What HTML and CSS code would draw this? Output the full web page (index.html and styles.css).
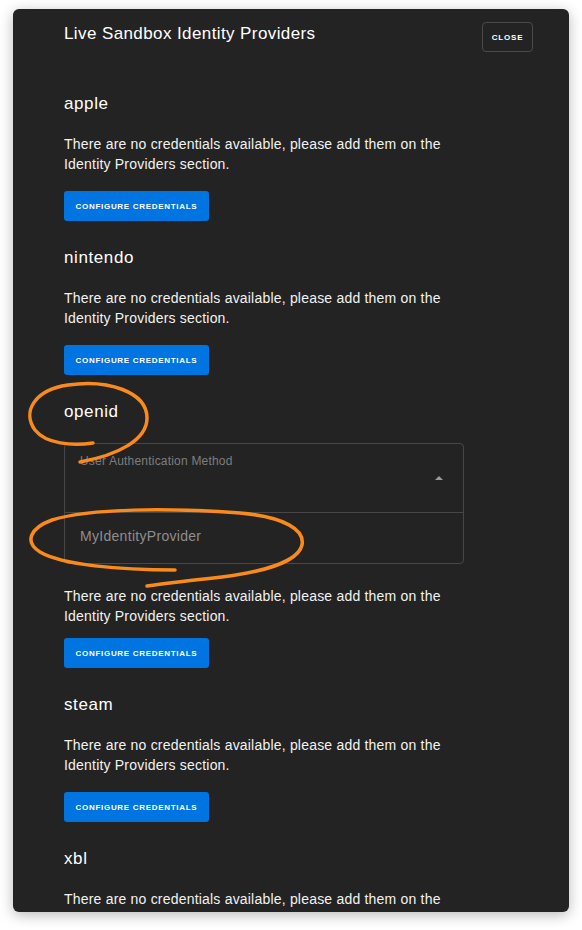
FILE: index.html
```html
<!DOCTYPE html>
<html>
<head>
<meta charset="utf-8">
<link rel="stylesheet" href="styles.css">
</head>
<body>
<div class="modal">
  <div class="header">
    <h1 class="title">Live Sandbox Identity Providers</h1>
    <button class="close-btn">CLOSE</button>
  </div>

  <section class="provider">
    <h2 class="provider-name">apple</h2>
    <p class="note">There are no credentials available, please add them on the Identity Providers section.</p>
    <button class="config-btn">CONFIGURE CREDENTIALS</button>
  </section>

  <section class="provider">
    <h2 class="provider-name">nintendo</h2>
    <p class="note">There are no credentials available, please add them on the Identity Providers section.</p>
    <button class="config-btn">CONFIGURE CREDENTIALS</button>
  </section>

  <section class="provider">
    <h2 class="provider-name name-openid">openid</h2>
    <div class="select">
      <div class="select-field">
        <span class="select-label">User Authentication Method</span>
        <span class="select-arrow"></span>
      </div>
      <div class="select-option">MyIdentityProvider</div>
    </div>
    <p class="note note-openid">There are no credentials available, please add them on the Identity Providers section.</p>
    <button class="config-btn">CONFIGURE CREDENTIALS</button>
  </section>

  <section class="provider">
    <h2 class="provider-name">steam</h2>
    <p class="note">There are no credentials available, please add them on the Identity Providers section.</p>
    <button class="config-btn">CONFIGURE CREDENTIALS</button>
  </section>

  <section class="provider">
    <h2 class="provider-name">xbl</h2>
    <p class="note">There are no credentials available, please add them on the Identity Providers section.</p>
    <button class="config-btn">CONFIGURE CREDENTIALS</button>
  </section>
</div>

<svg class="annotations" width="582" height="930" viewBox="0 0 582 930">
  <path d="M93 443 C72 446 46 444 35 430 C22 412 34 390 68 385 C108 379 147 392 147 418 C147 440 118 455 80 462" />
  <path d="M175 570 C120 570 62 565 40 552 C24 542 30 528 52 520 C90 508 170 508 240 513 C285 517 305 530 302 545 C298 562 262 572 222 577 C195 580 168 583 147 586" />
</svg>
</body>
</html>
```
FILE: styles.css
```css
html, body {
  margin: 0;
  padding: 0;
  background: #ffffff;
}

body {
  width: 582px;
  height: 930px;
  position: relative;
  overflow: hidden;
  font-family: "Liberation Sans", Arial, sans-serif;
}

.modal {
  margin: 9px 0 0 13px;
  width: 556px;
  height: 903px;
  box-sizing: border-box;
  background: #232323;
  border-radius: 6px;
  box-shadow: 0 3px 14px rgba(0, 0, 0, 0.28);
  overflow: hidden;
  padding: 13px 36px 0 51px;
  color: #f2f2f2;
}

.header {
  display: flex;
  justify-content: space-between;
  align-items: flex-start;
}

.title {
  margin: 0;
  font-size: 17px;
  font-weight: 400;
  line-height: 24px;
  letter-spacing: 0.4px;
  color: #ffffff;
}

.close-btn {
  width: 51px;
  height: 30px;
  box-sizing: border-box;
  border: 1px solid #4a4a4a;
  border-radius: 4px;
  background: transparent;
  color: #ffffff;
  font-family: "Liberation Sans", Arial, sans-serif;
  font-size: 8px;
  font-weight: 700;
  letter-spacing: 0.8px;
  padding: 0;
}

.provider {
  display: flex;
  flex-direction: column;
  align-items: flex-start;
}

.provider:first-of-type {
  margin-top: 40px;
}

.provider + .provider {
  margin-top: 25px;
}

.provider-name {
  margin: 0;
  font-size: 17px;
  font-weight: 400;
  line-height: 24px;
  letter-spacing: 0.6px;
  color: #ffffff;
}

.note {
  margin: 18px 0 0;
  width: 410px;
  font-size: 14px;
  line-height: 20px;
  letter-spacing: 0.2px;
  color: #f2f2f2;
}

.note-openid {
  margin-top: 22px;
}

.config-btn {
  margin-top: 17px;
  height: 30px;
  width: 145px;
  border: none;
  border-radius: 3px;
  background: #0074e0;
  color: #ffffff;
  font-family: "Liberation Sans", Arial, sans-serif;
  font-size: 8px;
  font-weight: 700;
  letter-spacing: 0.7px;
  padding: 0;
}

.note-openid + .config-btn {
  margin-top: 12px;
}

.select {
  margin-top: 19px;
  width: 400px;
  height: 121px;
  box-sizing: border-box;
  border: 1px solid #474747;
  border-radius: 4px;
  display: flex;
  flex-direction: column;
}

.select-field {
  height: 69px;
  box-sizing: border-box;
  border-bottom: 1px solid #474747;
  display: flex;
  justify-content: space-between;
  align-items: flex-start;
  padding: 10px 20px 0 15px;
}

.select-label {
  font-size: 12px;
  line-height: 14px;
  color: #7e7e7e;
  letter-spacing: 0.2px;
}

.select-arrow {
  margin-top: 22px;
  width: 0;
  height: 0;
  border-left: 4px solid transparent;
  border-right: 4px solid transparent;
  border-bottom: 4px solid #9a9a9a;
}

.select-option {
  padding: 15px 15px 0;
  font-size: 14px;
  line-height: 17px;
  letter-spacing: 0.3px;
  color: #8e8e8e;
}

.annotations {
  position: absolute;
  top: 0;
  left: 0;
  pointer-events: none;
}

.annotations path {
  fill: none;
  stroke: #fb8a1c;
  stroke-width: 3.5;
  stroke-linecap: round;
  stroke-linejoin: round;
}
```
